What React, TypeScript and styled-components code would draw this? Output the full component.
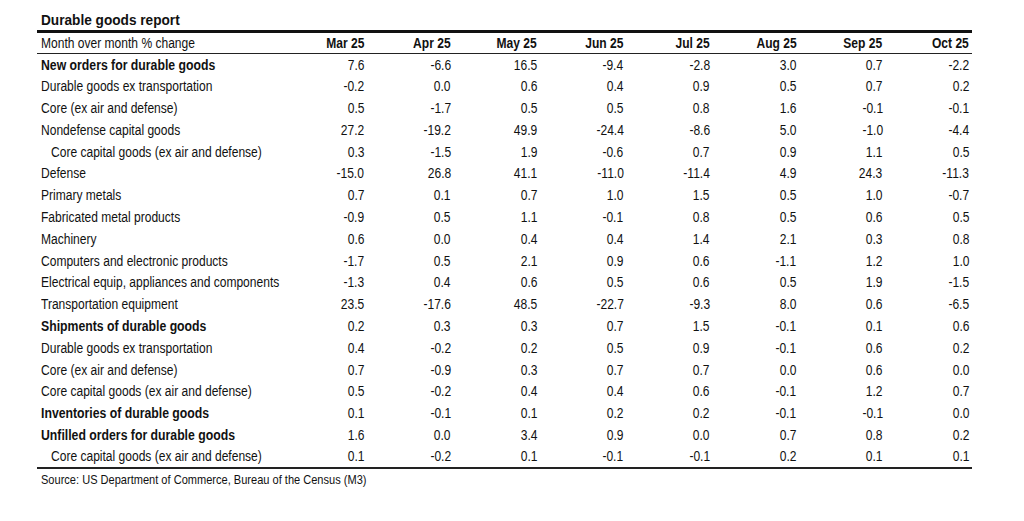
import React from 'react';
import styled, { createGlobalStyle } from 'styled-components';

const GlobalStyle = createGlobalStyle`
  html, body {
    margin: 0;
    padding: 0;
    background: #ffffff;
  }
  body {
    font-family: "Liberation Sans", Arial, sans-serif;
    color: #111111;
  }
`;

// narrow face is not installed, so the Arial metrics get squeezed
const Narrow = styled.span<{ $origin?: 'left' | 'right' }>`
  display: inline-block;
  transform: scaleX(0.86);
  transform-origin: ${({ $origin }) => $origin ?? 'left'} center;
`;

const Page = styled.div`
  width: 1024px;
  height: 521px;
  padding: 9px 0 0 37px;
  box-sizing: border-box;
`;

const Title = styled.div`
  font-size: 15.5px;
  font-weight: 700;
  line-height: 21px;
  padding-left: 4px;

  ${Narrow} {
    transform: scaleX(0.88);
  }
`;

const Table = styled.table`
  width: 935px;
  border-collapse: collapse;
  table-layout: fixed;
  border-top: 3px solid #111;
  border-bottom: 2px solid #222;
  font-size: 14px;
`;

const HeadCell = styled.th<{ $label?: boolean }>`
  height: 20px;
  padding: ${({ $label }) => ($label ? '0 0 0 4px' : '0 3px 0 0')};
  text-align: ${({ $label }) => ($label ? 'left' : 'right')};
  font-weight: ${({ $label }) => ($label ? 400 : 700)};
  border-bottom: 1.5px solid #222;
  white-space: nowrap;
  overflow: hidden;
`;

const Row = styled.tr`
  height: 21.8px;
`;

const LabelCell = styled.td<{ $bold?: boolean; $indent?: boolean }>`
  padding: 0 0 0 ${({ $indent }) => ($indent ? '14px' : '4px')};
  font-weight: ${({ $bold }) => ($bold ? 700 : 400)};
  white-space: nowrap;
  overflow: hidden;

  ${Narrow} {
    transform: scaleX(${({ $bold }) => ($bold ? 0.875 : 0.86)});
  }
`;

const NumCell = styled.td`
  padding: 0 3px 0 0;
  text-align: right;
  white-space: nowrap;
`;

const Source = styled.div`
  font-size: 13px;
  padding: 3px 0 0 4px;

  ${Narrow} {
    transform: scaleX(0.85);
  }
`;

type Line = { label: string; values: string[]; bold?: boolean; indent?: boolean };

const months = ['Mar 25', 'Apr 25', 'May 25', 'Jun 25', 'Jul 25', 'Aug 25', 'Sep 25', 'Oct 25'];

const lines: Line[] = [
  { label: 'New orders for durable goods', bold: true, values: ['7.6', '-6.6', '16.5', '-9.4', '-2.8', '3.0', '0.7', '-2.2'] },
  { label: 'Durable goods ex transportation', values: ['-0.2', '0.0', '0.6', '0.4', '0.9', '0.5', '0.7', '0.2'] },
  { label: 'Core (ex air and defense)', values: ['0.5', '-1.7', '0.5', '0.5', '0.8', '1.6', '-0.1', '-0.1'] },
  { label: 'Nondefense capital goods', values: ['27.2', '-19.2', '49.9', '-24.4', '-8.6', '5.0', '-1.0', '-4.4'] },
  { label: 'Core capital goods (ex air and defense)', indent: true, values: ['0.3', '-1.5', '1.9', '-0.6', '0.7', '0.9', '1.1', '0.5'] },
  { label: 'Defense', values: ['-15.0', '26.8', '41.1', '-11.0', '-11.4', '4.9', '24.3', '-11.3'] },
  { label: 'Primary metals', values: ['0.7', '0.1', '0.7', '1.0', '1.5', '0.5', '1.0', '-0.7'] },
  { label: 'Fabricated metal products', values: ['-0.9', '0.5', '1.1', '-0.1', '0.8', '0.5', '0.6', '0.5'] },
  { label: 'Machinery', values: ['0.6', '0.0', '0.4', '0.4', '1.4', '2.1', '0.3', '0.8'] },
  { label: 'Computers and electronic products', values: ['-1.7', '0.5', '2.1', '0.9', '0.6', '-1.1', '1.2', '1.0'] },
  { label: 'Electrical equip, appliances and components', values: ['-1.3', '0.4', '0.6', '0.5', '0.6', '0.5', '1.9', '-1.5'] },
  { label: 'Transportation equipment', values: ['23.5', '-17.6', '48.5', '-22.7', '-9.3', '8.0', '0.6', '-6.5'] },
  { label: 'Shipments of durable goods', bold: true, values: ['0.2', '0.3', '0.3', '0.7', '1.5', '-0.1', '0.1', '0.6'] },
  { label: 'Durable goods ex transportation', values: ['0.4', '-0.2', '0.2', '0.5', '0.9', '-0.1', '0.6', '0.2'] },
  { label: 'Core (ex air and defense)', values: ['0.7', '-0.9', '0.3', '0.7', '0.7', '0.0', '0.6', '0.0'] },
  { label: 'Core capital goods (ex air and defense)', values: ['0.5', '-0.2', '0.4', '0.4', '0.6', '-0.1', '1.2', '0.7'] },
  { label: 'Inventories of durable goods', bold: true, values: ['0.1', '-0.1', '0.1', '0.2', '0.2', '-0.1', '-0.1', '0.0'] },
  { label: 'Unfilled orders for durable goods', bold: true, values: ['1.6', '0.0', '3.4', '0.9', '0.0', '0.7', '0.8', '0.2'] },
  { label: 'Core capital goods (ex air and defense)', indent: true, values: ['0.1', '-0.2', '0.1', '-0.1', '-0.1', '0.2', '0.1', '0.1'] },
];

export default function App() {
  return (
    <>
      <GlobalStyle />
      <Page>
        <Title>
          <Narrow>Durable goods report</Narrow>
        </Title>
        <Table>
          <colgroup>
            <col style={{ width: 244 }} />
            {months.map((m) => (
              <col key={m} />
            ))}
          </colgroup>
          <thead>
            <tr>
              <HeadCell $label>
                <Narrow>Month over month % change</Narrow>
              </HeadCell>
              {months.map((m) => (
                <HeadCell key={m}>
                  <Narrow $origin="right">{m}</Narrow>
                </HeadCell>
              ))}
            </tr>
          </thead>
          <tbody>
            {lines.map((l, i) => (
              <Row key={i}>
                <LabelCell $bold={l.bold} $indent={l.indent}>
                  <Narrow>{l.label}</Narrow>
                </LabelCell>
                {l.values.map((v, j) => (
                  <NumCell key={j}>
                    <Narrow $origin="right">{v}</Narrow>
                  </NumCell>
                ))}
              </Row>
            ))}
          </tbody>
        </Table>
        <Source>
          <Narrow>Source: US Department of Commerce, Bureau of the Census (M3)</Narrow>
        </Source>
      </Page>
    </>
  );
}
